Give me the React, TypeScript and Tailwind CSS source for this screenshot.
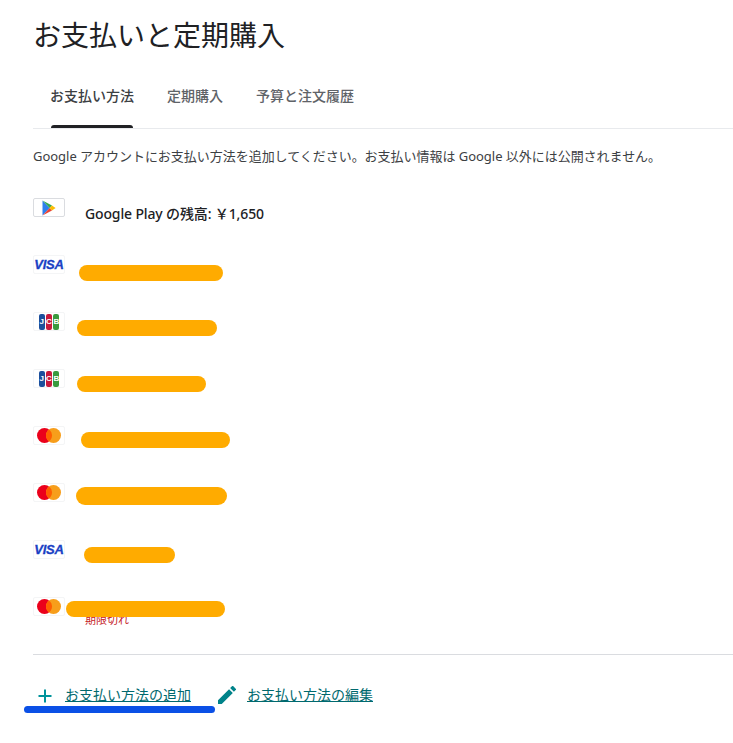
const sans = 'font-["Noto_Sans","Noto_Sans_CJK_JP",sans-serif]';

function PlayIcon() {
  return (
    <svg width="14" height="16" viewBox="0 0 14 16">
      <path d="M0.5 0.6 V15.4 L7.6 8 Z" fill="#2f80ed" />
      <path d="M0.5 0.6 L7.6 8 L10 5.5 Z" fill="#34a853" />
      <path d="M0.5 15.4 L7.6 8 L10 10.5 Z" fill="#ea4335" />
      <path d="M10 5.5 L7.6 8 L10 10.5 L13.6 8 Z" fill="#fbbc04" />
    </svg>
  );
}

function Visa() {
  return <span className='font-["Liberation_Sans"] text-[13px] leading-none font-bold tracking-[-0.2px] text-[#1a3fc4] italic [-webkit-text-stroke:0.3px_#1a3fc4]'>VISA</span>;
}

function Jcb() {
  return (
    <span className='flex h-[16px] w-[21px] gap-px font-["Liberation_Sans"] text-[8px] leading-[16px] font-bold text-white'>
      <span className="flex-1 rounded-[2px] bg-[#1c4f9c] text-center">J</span>
      <span className="flex-1 rounded-[2px] bg-[#c8193c] text-center">C</span>
      <span className="flex-1 rounded-[2px] bg-[#3a9a3e] text-center">B</span>
    </span>
  );
}

function Mastercard() {
  return (
    <svg width="24" height="15" viewBox="0 0 24 15">
      <circle cx="7.5" cy="7.5" r="7.5" fill="#eb001b" />
      <circle cx="16.5" cy="7.5" r="7.5" fill="#f79e1b" />
      <path d="M12 1.5a7.5 7.5 0 0 1 0 12a7.5 7.5 0 0 1 0-12z" fill="#ff5f00" />
    </svg>
  );
}

function CardBox({ children, play }: { children: React.ReactNode; play?: boolean }) {
  return (
    <div className={`flex h-[19px] w-[32px] items-center justify-center rounded-[2px] border ${play ? 'border-[#dadce0]' : 'border-[#f4f5f6]'}`}>
      {children}
    </div>
  );
}

const cards = [<Visa />, <Jcb />, <Jcb />, <Mastercard />, <Mastercard />, <Visa />, <Mastercard />];

// orange scribbles drawn over the card numbers
const marks = [
  'left-[79px] top-[265px] h-[16px] w-[144px]',
  'left-[77px] top-[320px] h-[16px] w-[140px]',
  'left-[77px] top-[376px] h-[16px] w-[129px]',
  'left-[81px] top-[432px] h-[16px] w-[149px]',
  'left-[76px] top-[487px] h-[18px] w-[151px]',
  'left-[84px] top-[547px] h-[16px] w-[91px]',
  'left-[66px] top-[601px] h-[16px] w-[159px]',
];

export default function App() {
  return (
    <div className={`relative h-[743px] w-[733px] overflow-hidden bg-white pl-[33px] ${sans}`}>
      <h1 className="pt-[15px] text-[28px] leading-[40px] font-normal text-[#202124]">お支払いと定期購入</h1>

      {/* Tabs */}
      <div className="mt-[18px] flex h-[56px] border-b border-[#e8eaed] text-[14px] font-medium text-[#5f6368]">
        <div className="relative px-[17px] pt-[11px] leading-[24px] text-[#3c4043]">
          お支払い方法
          <div className="absolute right-[18px] bottom-0 left-[18px] h-[3px] rounded-t-[3px] bg-[#202124]" />
        </div>
        <div className="px-[16px] pt-[11px] leading-[24px]">定期購入</div>
        <div className="px-[17px] pt-[11px] leading-[24px]">予算と注文履歴</div>
      </div>

      <p className="mt-[18px] text-[13px] leading-[18px] tracking-[-0.03px] text-[#3c4043]">
        Google アカウントにお支払い方法を追加してください。お支払い情報は Google 以外には公開されません。
      </p>

      {/* Payment methods */}
      <div className="mt-[33px] flex h-[57px] items-start">
        <CardBox play>
          <PlayIcon />
        </CardBox>
        <span className="mt-[6px] ml-[20px] text-[14px] leading-[20px] font-medium tracking-[-0.14px] text-[#202124]">Google Play の残高: ￥1,650</span>
      </div>
      {cards.map((card, i) => (
        <div key={i} className="relative h-[57px]">
          <CardBox>{card}</CardBox>
          {i === 6 && <span className="absolute top-[15px] left-[52px] text-[11px] leading-[16px] text-[#c5221f]">期限切れ</span>}
        </div>
      ))}

      <div className="border-t border-[#dadce0]" />

      {/* Actions */}
      <div className="mt-[30px] flex items-center text-[14px] leading-[20px] text-[#00696e]">
        <svg className="ml-[3px] translate-y-px" width="18" height="18" viewBox="0 0 18 18">
          <path d="M9 2.5v13M2.5 9h13" stroke="#00939b" strokeWidth="2" />
        </svg>
        <a className="ml-[11px] underline">お支払い方法の追加</a>
        <svg className="ml-[27px]" width="18" height="18" viewBox="3 3 18 18">
          <path d="M3 17.25V21h3.75L17.81 9.94l-3.75-3.75L3 17.25zM20.71 7.04a1 1 0 0 0 0-1.41l-2.34-2.34a1 1 0 0 0-1.41 0l-1.83 1.83 3.75 3.75 1.83-1.83z" fill="#00838a" />
        </svg>
        <a className="ml-[11px] underline">お支払い方法の編集</a>
      </div>

      {marks.map(m => (
        <div key={m} className={`absolute rounded-full bg-[#ffab00] ${m}`} />
      ))}
      <div className="absolute top-[706px] left-[24px] h-[7px] w-[191px] rounded-full bg-[#0b50e6]" />
    </div>
  );
}
